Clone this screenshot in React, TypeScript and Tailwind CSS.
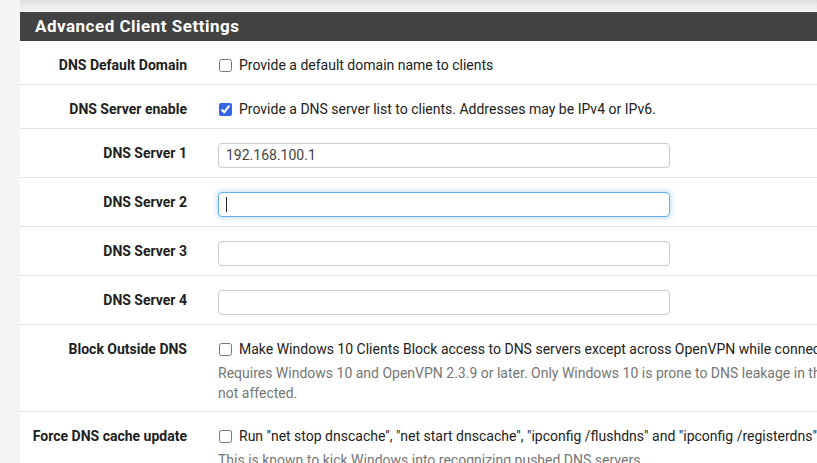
import React from 'react';

const font = { fontFamily: 'Roboto, "Liberation Sans", sans-serif' };

const Label: React.FC<{ children: React.ReactNode }> = ({ children }) => (
    <div className="w-[182px] shrink-0 pr-[15px] text-right text-[14px] leading-[20px] font-bold text-[#212121]">
        {children}
    </div>
);

const Check: React.FC<{ checked?: boolean; children: React.ReactNode }> = ({ checked, children }) => (
    <label className="flex items-start gap-[7px] text-[14px] leading-[20px] text-[#212121] whitespace-nowrap">
        <input
            type="checkbox"
            defaultChecked={checked}
            className="mt-[4px] ml-[1px] w-[13px] h-[13px] m-0 accent-[#3666e6]"
        />
        <span>{children}</span>
    </label>
);

const Row: React.FC<{ label: string; children: React.ReactNode }> = ({ label, children }) => (
    <div className="flex pt-[14px] pb-[9px] border-b border-[#e2e2e2]">
        <Label>{label}</Label>
        <div className="flex-1 pl-[16px] pr-[15px]">{children}</div>
    </div>
);

const TextField: React.FC<{ value?: string; focused?: boolean }> = ({ value, focused }) => (
    <div
        className={
            focused
                ? 'w-[452px] h-[25px] rounded-[4px] border border-[#66afe9] shadow-[0_0_6px_rgba(102,175,233,0.6)] bg-white flex items-center pl-[7px]'
                : 'w-[452px] h-[25px] rounded-[4px] border border-[#cccccc] bg-white flex items-center pl-[7px] text-[14px] text-[#444]'
        }
    >
        {focused ? <span className="w-px h-[15px] bg-[#222]" /> : value}
    </div>
);

export default function App() {
    return (
        <div className="w-[817px] h-[463px] overflow-hidden bg-[#f5f5f5]" style={font}>
            <div className="ml-[20px] w-[1158px]">
                {/* bottom of previous panel */}
                <div className="h-[12px] bg-gradient-to-b from-[#dddddd] via-[#ececec] to-[#f0f0f0] border-b border-[#f7f7f7]" />

                <div className="bg-white">
                    {/* Header */}
                    <div className="h-[29px] bg-[#424242] flex items-center pl-[15px]">
                        <h2 className="text-white text-[17px] font-bold tracking-[0.5px]">Advanced Client Settings</h2>
                    </div>

                    <Row label="DNS Default Domain">
                        <Check>Provide a default domain name to clients</Check>
                    </Row>
                    <Row label="DNS Server enable">
                        <Check checked>Provide a DNS server list to clients. Addresses may be IPv4 or IPv6.</Check>
                    </Row>
                    <Row label="DNS Server 1">
                        <TextField value="192.168.100.1" />
                    </Row>
                    <Row label="DNS Server 2">
                        <TextField focused />
                    </Row>
                    <Row label="DNS Server 3">
                        <TextField />
                    </Row>
                    <Row label="DNS Server 4">
                        <TextField />
                    </Row>
                    <Row label="Block Outside DNS">
                        <Check>
                            Make Windows 10 Clients Block access to DNS servers except across OpenVPN while connected, forcing clients to use only VPN DNS servers.
                        </Check>
                        <p className="mt-[4px] -mb-[1px] text-[14px] leading-[20px] text-[#757575]">
                            Requires Windows 10 and OpenVPN 2.3.9 or later. Only Windows 10 is prone to DNS leakage in this way, other clients will ignore the option as they are not affected.
                        </p>
                    </Row>
                    <Row label="Force DNS cache update">
                        <Check>
                            Run "net stop dnscache", "net start dnscache", "ipconfig /flushdns" and "ipconfig /registerdns" on connection initiation.
                        </Check>
                        <p className="mt-[4px] text-[14px] leading-[20px] text-[#757575]">
                            This is known to kick Windows into recognizing pushed DNS servers.
                        </p>
                    </Row>
                </div>
            </div>
        </div>
    );
}
